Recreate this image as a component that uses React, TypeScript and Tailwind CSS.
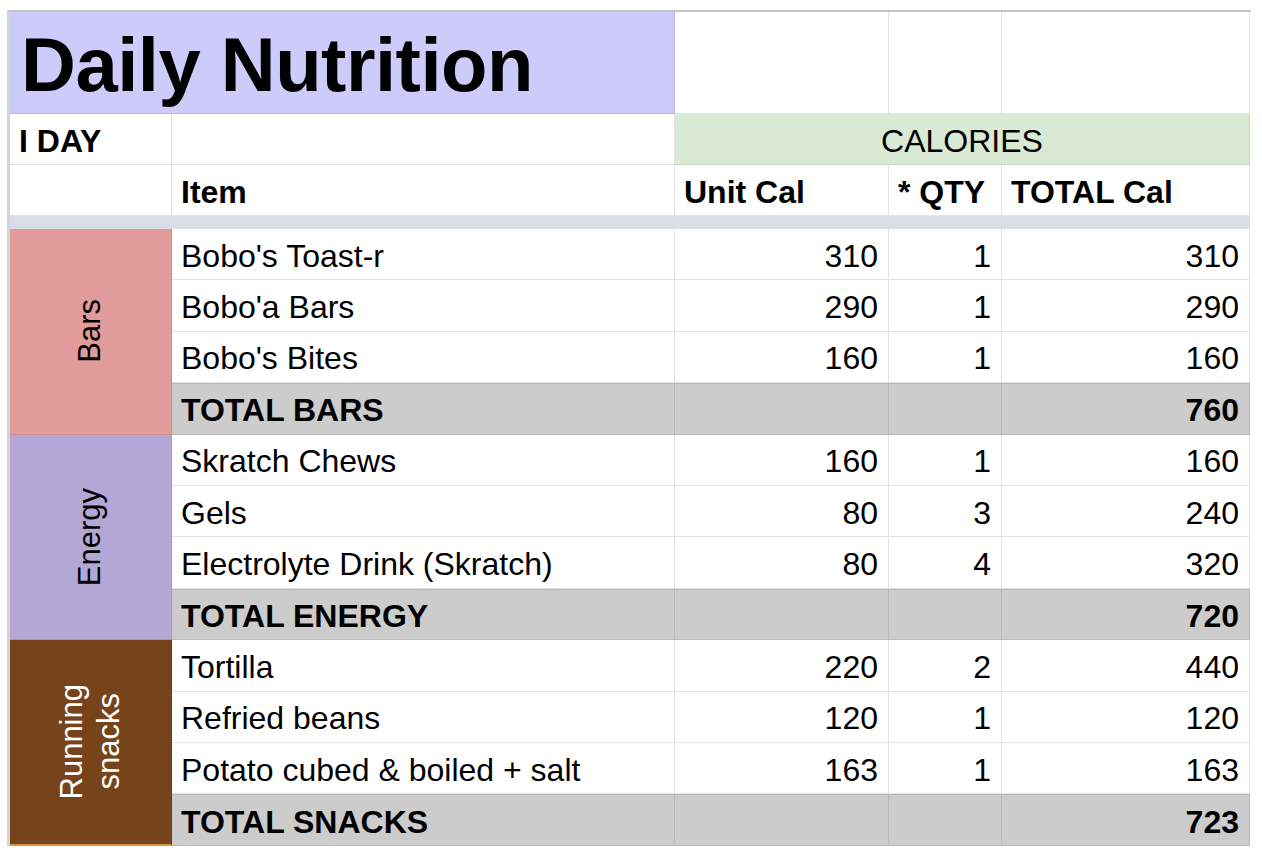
import React from "react";

type Item = { name: string; unit: number; qty: number };
type Group = {
  label: string[];
  cell: string;
  items: Item[];
  totalLabel: string;
  total: number;
};

const groups: Group[] = [
  {
    label: ["Bars"],
    cell: "bg-[#e09b9a] border-r-[#d48d8c] border-b-[#d48d8c] text-black",
    items: [
      { name: "Bobo's Toast-r", unit: 310, qty: 1 },
      { name: "Bobo'a Bars", unit: 290, qty: 1 },
      { name: "Bobo's Bites", unit: 160, qty: 1 },
    ],
    totalLabel: "TOTAL BARS",
    total: 760,
  },
  {
    label: ["Energy"],
    cell: "bg-[#b3a8d5] border-r-[#a497cc] border-b-[#a497cc] text-black",
    items: [
      { name: "Skratch Chews", unit: 160, qty: 1 },
      { name: "Gels", unit: 80, qty: 3 },
      { name: "Electrolyte Drink (Skratch)", unit: 80, qty: 4 },
    ],
    totalLabel: "TOTAL ENERGY",
    total: 720,
  },
  {
    label: ["Running", "snacks"],
    cell: "bg-[#76431a] border-r-[#6a3a13] border-b-2 border-b-[#e0913f] text-white",
    items: [
      { name: "Tortilla", unit: 220, qty: 2 },
      { name: "Refried beans", unit: 120, qty: 1 },
      { name: "Potato cubed & boiled + salt", unit: 163, qty: 1 },
    ],
    totalLabel: "TOTAL SNACKS",
    total: 723,
  },
];

const cell = "flex items-center border-r border-b border-[#e2e2e2] px-[9px] pt-[3px]";
const num = `${cell} justify-end pr-[10px]`;
const total =
  "flex items-center border-r border-b border-t border-[#b9b9b9] bg-[#cccccc] px-[9px] pt-[3px] font-bold";

export default function App() {
  return (
    <div className="min-h-screen bg-white pl-[7px] pt-[10px] text-black [font-family:'Liberation_Sans',Arial,sans-serif]">
      <div className="grid w-[1244px] grid-cols-[162px_503px_214px_113px_248px] grid-rows-[102px_51px_51px_13px_repeat(12,51.4px)] border-l-[3px] border-t-2 border-l-[#d4d4d4] border-t-[#c4c4c4] text-[32px]">
        {/* title row */}
        <div className="col-span-2 flex items-center border-r border-b border-[#b8b8ea] bg-[#cccbfa] pl-[11px] pt-[4px] text-[76px] font-bold tracking-[-0.5px]">
          Daily Nutrition
        </div>
        <div className={cell} />
        <div className={cell} />
        <div className={cell} />

        {/* I DAY / CALORIES */}
        <div className={`${cell} font-bold`}>I DAY</div>
        <div className={cell} />
        <div className="col-span-3 flex items-center justify-center border-r border-b border-[#c7d9bf] bg-[#d9e9d3] pt-[3px]">
          CALORIES
        </div>

        {/* headers */}
        <div className={cell} />
        <div className={`${cell} font-bold`}>Item</div>
        <div className={`${cell} font-bold`}>Unit Cal</div>
        <div className={`${cell} font-bold`}>* QTY</div>
        <div className={`${cell} font-bold`}>TOTAL Cal</div>

        {/* frozen divider */}
        <div className="col-span-5 bg-[#dadde5]" />

        {groups.map((group) => (
          <React.Fragment key={group.totalLabel}>
            <div
              className={`row-span-4 flex items-center justify-center border-r border-b ${group.cell}`}
            >
              <span className="rotate-180 text-center text-[31px] leading-[1.18] [writing-mode:vertical-rl]">
                {group.label.map((line, i) => (
                  <React.Fragment key={line}>
                    {i > 0 && <br />}
                    {line}
                  </React.Fragment>
                ))}
              </span>
            </div>
            {group.items.map((item) => (
              <React.Fragment key={item.name}>
                <div className={cell}>{item.name}</div>
                <div className={num}>{item.unit}</div>
                <div className={num}>{item.qty}</div>
                <div className={num}>{item.unit * item.qty}</div>
              </React.Fragment>
            ))}
            <div className={total}>{group.totalLabel}</div>
            <div className={total} />
            <div className={total} />
            <div className={`${total} justify-end pr-[10px]`}>{group.total}</div>
          </React.Fragment>
        ))}
      </div>
    </div>
  );
}
